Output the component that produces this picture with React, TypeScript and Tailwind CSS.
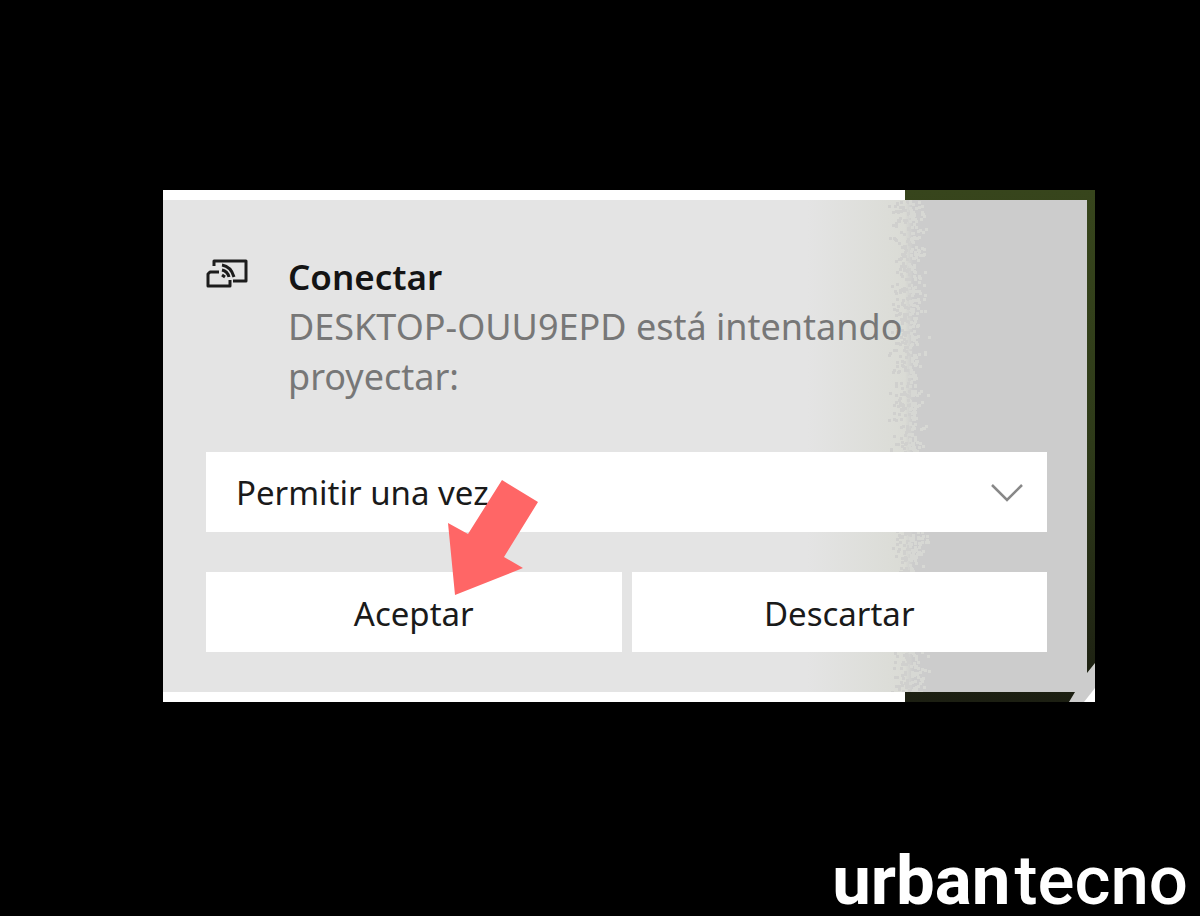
import { ReactNode } from "react";

interface Speck {
  x: number;
  y: number;
  light: boolean;
}

const SPECK_AREA = { width: 64, height: 492 };

// Small seeded generator so the grain is the same on every render
function makeSpecks(count: number): Speck[] {
  let seed = 7;
  const next = () => {
    seed = (seed * 16807) % 2147483647;
    return seed / 2147483647;
  };
  return [...Array(count)].map(() => {
    const offset = (next() + next() + next() - 1.5) * 16;
    return {
      x: Math.round(31 + offset),
      y: Math.round(next() * SPECK_AREA.height),
      light: offset > 0,
    };
  });
}

const specks = makeSpecks(1000);

function GrainEdge() {
  return (
    <svg
      className="absolute top-0 right-[146px] h-full w-16"
      viewBox={`0 0 ${SPECK_AREA.width} ${SPECK_AREA.height}`}
      preserveAspectRatio="none"
      aria-hidden="true"
    >
      {specks.map((s, i) => (
        <rect key={i} x={s.x} y={s.y} width="3" height="3" fill={s.light ? "#d7d8d4" : "#d0d0ce"} />
      ))}
    </svg>
  );
}

function ProjectIcon() {
  return (
    <svg className="h-[30px] w-[42px]" viewBox="0 0 42 30" fill="none" stroke="#1c1c1c" strokeWidth="3" strokeLinejoin="round" aria-hidden="true">
      <path d="M8 7V2H40V22H27" />
      <path d="M13 13H4L2 15V27H24V21" />
      <path d="M16 6C22 7 26 11 28 18" strokeWidth="3" />
      <path d="M16 11C20 12 22 14 23 18" strokeWidth="3" />
      <path d="M16 16L19 18" strokeWidth="3" />
    </svg>
  );
}

function PointerArrow() {
  return (
    <svg
      className="pointer-events-none absolute top-[280px] left-[285px] h-[115px] w-[90px]"
      viewBox="0 0 90 115"
      aria-hidden="true"
    >
      <path d="M54 0L90 22L56 77L75 88L7 115L0 43L20 54Z" fill="#ff6666" />
    </svg>
  );
}

function CornerFold() {
  return (
    <svg className="absolute right-0 bottom-0 h-10 w-[26px]" viewBox="0 0 26 40" aria-hidden="true">
      <path d="M26 1L18 11V30H6L0 40H26Z" fill="#cccccc" />
      <path d="M26 26L15 40H26Z" fill="#ffffff" />
    </svg>
  );
}

function ToastButton({ children }: { children: ReactNode }) {
  return (
    <button type="button" className="h-20 flex-1 bg-white pt-1 text-[33px] text-[#1a1a1a]">
      {children}
    </button>
  );
}

export default function App() {
  return (
    <div className="flex min-h-screen flex-col overflow-hidden bg-black font-['Noto_Sans',sans-serif]">
      <main className="pt-[190px] pr-[105px] pl-[163px]">
        <div className="relative bg-[linear-gradient(90deg,#fff_calc(100%-190px),transparent_calc(100%-190px)),linear-gradient(#37451c,#2e3a19_50%,#1c1f12)] py-[10px] pr-2">
          <CornerFold />
          <section
            aria-labelledby="toast-title"
            className="relative bg-[linear-gradient(90deg,#e4e4e4_calc(100%-280px),#dcddd8_calc(100%-200px),#dadbd5_calc(100%-182px),#ccc_calc(100%-174px))] pt-[52px] pr-10 pb-10 pl-[43px]"
          >
            <GrainEdge />
            <div className="relative flex gap-10">
              <div className="pt-[7px]">
                <ProjectIcon />
              </div>
              <div className="text-[36px] leading-[50px]">
                <h1 id="toast-title" className="text-[35px] font-semibold text-[#141414]">
                  Conectar
                </h1>
                <p className="text-[#777]">
                  DESKTOP-OUU9EPD está intentando
                  <br />
                  proyectar:
                </p>
              </div>
            </div>

            <div className="relative mt-[50px]">
              <select
                aria-label="Permiso de proyección"
                className="block h-20 w-full appearance-none bg-white px-[30px] pt-[2px] text-[33px] text-[#1a1a1a]"
              >
                <option>Permitir una vez</option>
              </select>
              <svg
                className="pointer-events-none absolute top-8 right-6 h-[18px] w-8"
                viewBox="0 0 32 18"
                fill="none"
                stroke="#888"
                strokeWidth="2.5"
                aria-hidden="true"
              >
                <path d="M1 1L16 16L31 1" />
              </svg>
            </div>

            <div className="relative mt-10 flex gap-[10px]">
              <ToastButton>Aceptar</ToastButton>
              <ToastButton>Descartar</ToastButton>
            </div>

            <PointerArrow />
          </section>
        </div>
      </main>

      <footer className="mt-auto flex justify-end gap-1 pr-3 font-['Roboto',sans-serif] text-[69px] leading-[70px] text-white">
        <span className="font-bold">urban</span>
        <span className="font-medium">tecno</span>
      </footer>
    </div>
  );
}
